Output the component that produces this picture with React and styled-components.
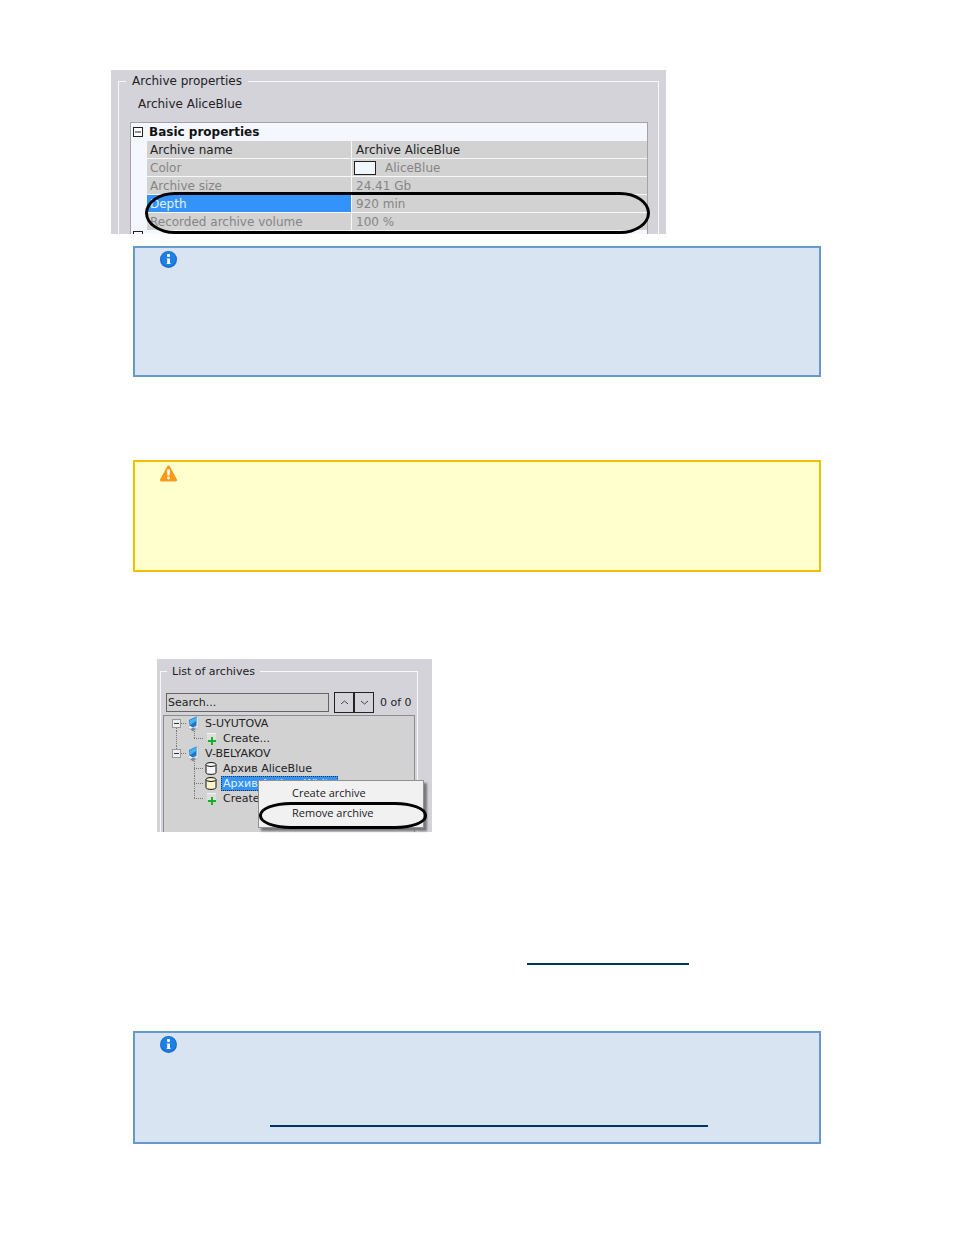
import React from 'react';
import styled, { createGlobalStyle } from 'styled-components';

const color = {
  panel: '#d4d3da',
  field: '#d2d2d2',
  alice: '#f4f8fe',
  line: '#f8f8fa',
  select: '#3393fb',
  text: '#222226',
  muted: '#858585',
  link: '#003366',
};

const properties = [
  { name: 'Archive name', value: 'Archive AliceBlue', active: true },
  { name: 'Color', value: 'AliceBlue', swatch: true },
  { name: 'Archive size', value: '24.41 Gb' },
  { name: 'Depth', value: '920 min', selected: true },
  { name: 'Recorded archive volume', value: '100 %' },
];

const tree = [
  { id: 1, icon: 'server', label: 'S-UYUTOVA', below: true },
  { id: 2, icon: 'add', label: 'Create...', child: true, trunk: true, last: true },
  { id: 3, icon: 'server', label: 'V-BELYAKOV', above: true },
  { id: 4, icon: 'disk', label: 'Архив AliceBlue', child: true },
  { id: 5, icon: 'diskOn', label: 'Архив AntiqueWhite', child: true, selected: true },
  { id: 6, icon: 'add', label: 'Create...', child: true, last: true },
];

export default function App() {
  return (
    <>
      <GlobalStyle />
      <Page>
        <PropertiesFigure />
        <Note $top={12} $height={131}>
          <InfoIcon />
        </Note>
        <Note $top={83} $height={112} $warning>
          <WarningIcon />
        </Note>
        <ArchivesFigure />
        <Paragraph>
          <BlankLink href="#archive" aria-label="Link" $width={162} />
        </Paragraph>
        <Note $top={66} $height={113}>
          <InfoIcon />
          <NoteLink>
            <BlankLink href="#settings" aria-label="Link" $width={438} />
          </NoteLink>
        </Note>
      </Page>
    </>
  );
}

function PropertiesFigure() {
  return (
    <PropertiesPanel>
      <Group>
        <Legend>Archive properties</Legend>
        <Subtitle>Archive AliceBlue</Subtitle>
        <GridBox>
          <Category>
            <Toggle aria-label="Collapse">
              <ToggleIcon />
            </Toggle>
            Basic properties
          </Category>
          <Table>
            <tbody>
              {properties.map((el) => (
                <Row key={el.name} $active={el.active}>
                  <NameCell $selected={el.selected}>{el.name}</NameCell>
                  <ValueCell>
                    <Value>
                      {el.swatch && <Swatch />}
                      {el.value}
                    </Value>
                  </ValueCell>
                </Row>
              ))}
            </tbody>
          </Table>
          <Category $cut>
            <Toggle aria-label="Collapse">
              <ToggleIcon />
            </Toggle>
          </Category>
        </GridBox>
      </Group>
      <PropertiesRing />
    </PropertiesPanel>
  );
}

function ArchivesFigure() {
  return (
    <ArchivesPanel>
      <SmallGroup>
        <SmallLegend>List of archives</SmallLegend>
        <SearchBar>
          <Search type="text" placeholder="Search..." aria-label="Search" />
          <Steps>
            <Step aria-label="Previous">
              <svg width="9" height="5" viewBox="0 0 9 5">
                <path d="M1 4 L4.5 1 L8 4" fill="none" stroke="#444" />
              </svg>
            </Step>
            <Step aria-label="Next">
              <svg width="9" height="5" viewBox="0 0 9 5">
                <path d="M1 1 L4.5 4 L8 1" fill="none" stroke="#444" />
              </svg>
            </Step>
          </Steps>
          <Count>0 of 0</Count>
        </SearchBar>
        <Tree>
          {tree.map((el) => (
            <TreeRow key={el.id}>
              <Branch node={el} />
              <IconBox>
                <NodeIcon name={el.icon} />
              </IconBox>
              <Label $selected={el.selected}>{el.label}</Label>
            </TreeRow>
          ))}
        </Tree>
      </SmallGroup>
      <Menu>
        <MenuItem>Create archive</MenuItem>
        <MenuItem>Remove archive</MenuItem>
      </Menu>
      <MenuRing />
    </ArchivesPanel>
  );
}

function ToggleIcon() {
  return (
    <svg width="10" height="10" viewBox="0 0 10 10">
      <rect x="0.5" y="0.5" width="9" height="9" fill="#fff" stroke="#222" />
      <path d="M2 5 H8" stroke="#222" />
    </svg>
  );
}

// dotted lines to the left of a tree node
function Branch({ node }) {
  const dots = { stroke: '#777', strokeDasharray: '1 1', fill: 'none' };
  if (node.child) {
    return (
      <svg width="33" height="15" viewBox="0 0 33 15">
        {node.trunk && <path d="M4.5 0 V15" {...dots} />}
        <path d={node.last ? 'M22.5 0 V8' : 'M22.5 0 V15'} {...dots} />
        <path d="M22 7.5 H32" {...dots} />
      </svg>
    );
  }
  return (
    <svg width="15" height="15" viewBox="0 0 15 15">
      {node.above && <path d="M4.5 0 V4" {...dots} />}
      {node.below && <path d="M4.5 12 V15" {...dots} />}
      <path d="M9 7.5 H15" {...dots} />
      <rect x="0.5" y="3.5" width="8" height="8" fill="#eee" stroke="#999" />
      <path d="M2 7.5 H7" stroke="#333" />
    </svg>
  );
}

function NodeIcon({ name }) {
  if (name === 'server') {
    return (
      <svg width="12" height="16" viewBox="0 0 12 16">
        <path d="M9 1 L11 0.5 V12 L9 13.500 Z" fill="#f2f4f6" stroke="#a4adb5" strokeWidth="0.5" />
        <path d="M2 4 L9.500 0.5 V9.500 L3 13 Z" fill="#1c78cc" />
        <path d="M2.500 4.500 L9 1.500 V5 L3 9 Z" fill="#45b4f0" />
        <path d="M0.5 11 L3 10 L9 13 L6 15.500 Z" fill="#7c8a95" />
        <path d="M0.5 11 L3 10 L6 11.500 L3.500 13 Z" fill="#f4f6f8" />
      </svg>
    );
  }
  if (name === 'add') {
    return (
      <svg width="12" height="15" viewBox="0 0 12 15">
        <path d="M2 2 H11 V9 H2 Z" fill="#dedede" />
        <path d="M2 2.500 H11" stroke="#f4f4f4" />
        <path d="M7 6 V14 M3 10 H11" stroke="#12b32a" strokeWidth="2" />
      </svg>
    );
  }
  const fill = name === 'diskOn' ? '#fdf3cd' : '#f4f6f8';
  return (
    <svg width="12" height="15" viewBox="0 0 12 15">
      <path d="M1 3.500 V11.500 C1 14 11 14 11 11.500 V3.500" fill={fill} stroke="#111" />
      <ellipse cx="6" cy="3.500" rx="5" ry="2" fill={fill} stroke="#111" />
    </svg>
  );
}

function InfoIcon() {
  return (
    <svg width="18" height="18" viewBox="0 0 18 18">
      <circle cx="8.500" cy="8.500" r="8.500" fill="#1a6fd0" />
      <circle cx="8.500" cy="8" r="7.200" fill="#1c80e4" />
      <rect x="7" y="3" width="3" height="3" rx="1" fill="#fff" />
      <path d="M6.500 7.500 H10 V12.500 H11 V13 H6.500 V12.500 H7.200 V8 H6.500 Z" fill="#fff" />
    </svg>
  );
}

function WarningIcon() {
  return (
    <svg width="18" height="18" viewBox="0 0 18 18">
      <path
        d="M8.500 2 L15.500 15 H1.500 Z"
        fill="#fa9a1c"
        stroke="#fa9a1c"
        strokeWidth="3"
        strokeLinejoin="round"
      />
      <path d="M7 4.500 H10 L9.500 10.500 H7.500 Z" fill="#fff" />
      <circle cx="8.500" cy="13" r="1.400" fill="#fff" />
    </svg>
  );
}

const GlobalStyle = createGlobalStyle`
  * {
    box-sizing: border-box;
  }
  body {
    margin: 0;
    background-color: #fff;
    font-family: 'DejaVu Sans', sans-serif;
    color: ${color.text};
  }
  svg {
    display: block;
    flex-shrink: 0;
  }
  button {
    font: inherit;
    color: inherit;
    padding: 0;
  }
`;

const Page = styled.main`
  padding: 70px 133px 91px 111px;
`;

const Note = styled.section`
  display: flex;
  flex-direction: column;
  justify-content: space-between;
  min-height: ${(props) => props.$height}px;
  margin: ${(props) => props.$top}px 0 0 22px;
  padding: 3px 25px 15px;
  border: 2px solid ${(props) => (props.$warning ? '#f0c000' : '#6699cc')};
  background-color: ${(props) => (props.$warning ? '#ffffce' : '#d8e4f1')};
`;

const Paragraph = styled.p`
  display: flex;
  margin: 0 0 0 416px;
  padding-top: 131px;
`;

const NoteLink = styled.div`
  padding-left: 110px;
`;

const BlankLink = styled.a`
  display: block;
  width: ${(props) => props.$width}px;
  height: 2px;
  background-color: ${color.link};
`;

const PropertiesPanel = styled.div`
  position: relative;
  max-width: 555px;
  height: 164px;
  overflow: hidden;
  padding: 3px 7px 0;
  background-color: ${color.panel};
  font-size: 12px;
  line-height: 16px;
`;

const Group = styled.fieldset`
  min-width: 0;
  margin: 0;
  padding: 0 10px 0 11px;
  border: 1px solid ${color.line};
  border-bottom: none;
`;

const Legend = styled.legend`
  margin-left: -4px;
  padding: 0 6px;
`;

const Subtitle = styled.p`
  margin: 0;
  padding: 7px 8px 10px;
`;

const GridBox = styled.div`
  border: 1px solid #a2a2a8;
  border-bottom: none;
  background-color: ${color.alice};
`;

const Category = styled.div`
  display: flex;
  align-items: ${(props) => (props.$cut ? 'flex-start' : 'center')};
  gap: 6px;
  height: 18px;
  padding-left: 2px;
  font-weight: bold;
  color: #111;
`;

const Toggle = styled.button`
  border: none;
  background: none;
`;

const Table = styled.table`
  width: calc(100% - 16px);
  margin-left: 16px;
  table-layout: fixed;
  border-collapse: separate;
  border-spacing: 0;
`;

const Row = styled.tr`
  height: 18px;
  background-color: ${color.field};
  color: ${(props) => (props.$active ? color.text : color.muted)};
`;

const Cell = styled.td`
  padding: 0 0 0 3px;
  border-bottom: 1px solid ${color.line};
  white-space: nowrap;
`;

const NameCell = styled(Cell)`
  width: 204px;
  ${(props) => props.$selected && `background-color: ${color.select}; color: #e4f0ff;`}
`;

const ValueCell = styled(Cell)`
  padding-left: 4px;
  border-left: 1px solid ${color.line};
`;

const Value = styled.div`
  display: flex;
  align-items: center;
  height: 16px;
`;

const Swatch = styled.span`
  width: 22px;
  height: 14px;
  margin: 0 9px 0 -2px;
  border: 1px solid #222;
  background-color: #f0f8ff;
`;

const Ring = styled.div`
  position: absolute;
  border: 3px solid #000;
  pointer-events: none;
`;

const PropertiesRing = styled(Ring)`
  left: 34px;
  right: 16px;
  bottom: 0;
  height: 42px;
  border-radius: 30px / 21px;
`;

const ArchivesPanel = styled.div`
  position: relative;
  max-width: 275px;
  height: 173px;
  margin: 87px 0 0 46px;
  padding: 5px 14px 0 3px;
  background-color: ${color.panel};
  font-size: 11px;
  line-height: 15px;
`;

const SmallGroup = styled.fieldset`
  display: flex;
  flex-direction: column;
  min-width: 0;
  height: 168px;
  margin: 0;
  padding: 0 2px;
  border: 1px solid ${color.line};
  border-bottom: none;
`;

const SmallLegend = styled.legend`
  margin-left: 4px;
  padding: 0 5px;
`;

const SearchBar = styled.div`
  display: flex;
  align-items: center;
  padding: 13px 0 2px 3px;
`;

const Search = styled.input`
  width: 163px;
  height: 19px;
  padding: 0 1px;
  border: 1px solid #666;
  background-color: ${color.field};
  font: inherit;
  &::placeholder {
    color: ${color.text};
    opacity: 1;
  }
`;

const Steps = styled.div`
  display: flex;
  margin: 0 6px 0 5px;
`;

const Step = styled.button`
  display: flex;
  align-items: center;
  justify-content: center;
  width: 20px;
  height: 21px;
  border: 1px solid #222;
  background-color: ${color.panel};
`;

const Count = styled.span`
  white-space: nowrap;
`;

const Tree = styled.div`
  flex: 1;
  padding-left: 8px;
  border: 1px solid #8c8c90;
  border-bottom: none;
  background-color: ${color.field};
`;

const TreeRow = styled.div`
  display: flex;
  align-items: center;
  height: 15px;
`;

const IconBox = styled.div`
  width: 16px;
`;

const Label = styled.span`
  padding: 0 1px;
  border: 1px solid transparent;
  line-height: 13px;
  white-space: nowrap;
  ${(props) =>
    props.$selected &&
    `border: 1px dotted #234; background-color: ${color.select}; color: #e4f0ff;`}
`;

const Menu = styled.div`
  position: absolute;
  top: 121px;
  left: 101px;
  width: 166px;
  height: 48px;
  padding: 1px 2px;
  border: 1px solid #909090;
  background-color: #f1f1f1;
  box-shadow: 3px 3px 2px #77777c;
`;

const MenuItem = styled.button`
  display: block;
  width: 100%;
  height: 20px;
  padding-left: 31px;
  border: none;
  background: none;
  font-family: 'Open Sans', sans-serif;
  font-size: 11px;
  text-align: left;
`;

const MenuRing = styled(Ring)`
  top: 143px;
  left: 102px;
  width: 168px;
  height: 27px;
  border-radius: 32px / 13px;
`;
